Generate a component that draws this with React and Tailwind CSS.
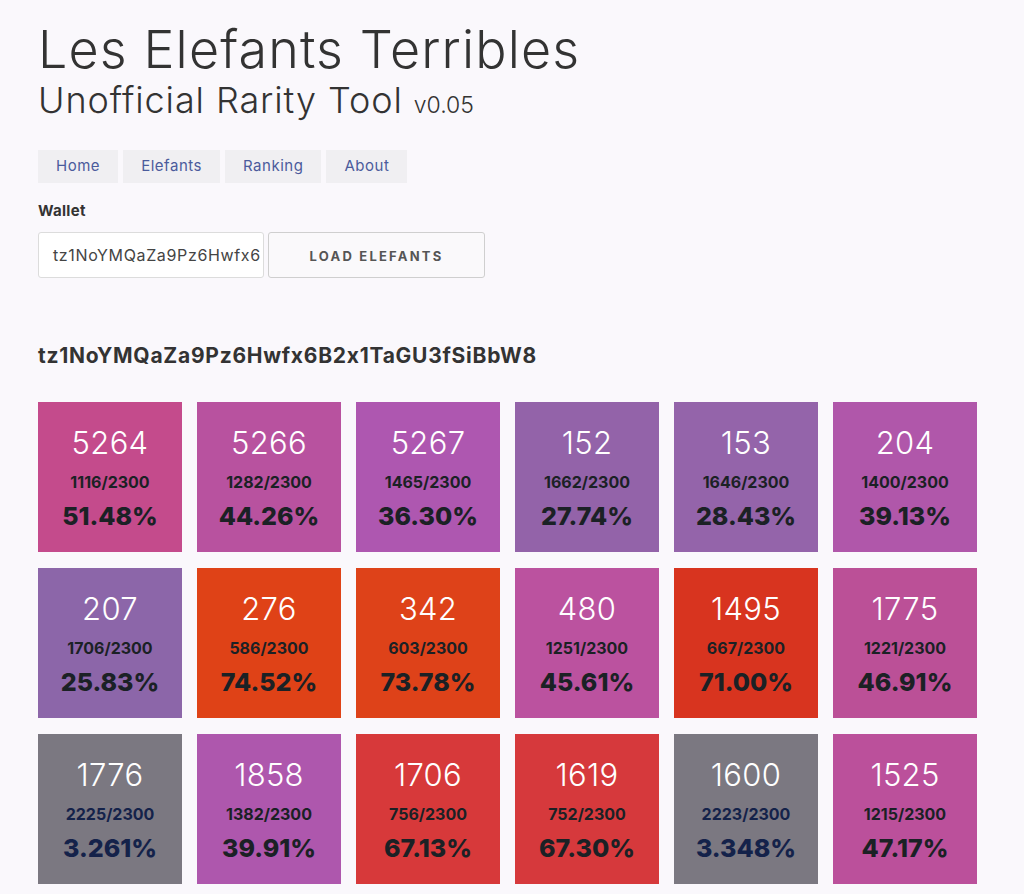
import React from "react";

const tiles = [
  { id: 5264, rank: "1116/2300", pct: "51.48%", bg: "bg-[#c44b8c]", dark: false },
  { id: 5266, rank: "1282/2300", pct: "44.26%", bg: "bg-[#b8529f]", dark: false },
  { id: 5267, rank: "1465/2300", pct: "36.30%", bg: "bg-[#ae57b0]", dark: false },
  { id: 152, rank: "1662/2300", pct: "27.74%", bg: "bg-[#9363a9]", dark: false },
  { id: 153, rank: "1646/2300", pct: "28.43%", bg: "bg-[#9464aa]", dark: false },
  { id: 204, rank: "1400/2300", pct: "39.13%", bg: "bg-[#b057aa]", dark: false },
  { id: 207, rank: "1706/2300", pct: "25.83%", bg: "bg-[#8c66a9]", dark: false },
  { id: 276, rank: "586/2300", pct: "74.52%", bg: "bg-[#df4217]", dark: false },
  { id: 342, rank: "603/2300", pct: "73.78%", bg: "bg-[#de4219]", dark: false },
  { id: 480, rank: "1251/2300", pct: "45.61%", bg: "bg-[#bb529f]", dark: false },
  { id: 1495, rank: "667/2300", pct: "71.00%", bg: "bg-[#d8341f]", dark: false },
  { id: 1775, rank: "1221/2300", pct: "46.91%", bg: "bg-[#bb5097]", dark: false },
  { id: 1776, rank: "2225/2300", pct: "3.261%", bg: "bg-[#7b7881]", dark: true },
  { id: 1858, rank: "1382/2300", pct: "39.91%", bg: "bg-[#ae57ad]", dark: false },
  { id: 1706, rank: "756/2300", pct: "67.13%", bg: "bg-[#d7393a]", dark: false },
  { id: 1619, rank: "752/2300", pct: "67.30%", bg: "bg-[#d6393c]", dark: false },
  { id: 1600, rank: "2223/2300", pct: "3.348%", bg: "bg-[#7b7881]", dark: true },
  { id: 1525, rank: "1215/2300", pct: "47.17%", bg: "bg-[#bb509b]", dark: false },
];

const navItems = ["Home", "Elefants", "Ranking", "About"];

function Tile({ t }) {
  const ink = t.dark ? "text-[#14224a]" : "text-[#1b2125]";
  return (
    <div className={`${t.bg} h-[150px] flex flex-col items-center pt-[21px]`}>
      <div className="text-[31px] font-light leading-[40px] tracking-[0.01em] text-white">{t.id}</div>
      <div className={`mt-[9px] text-[16px] font-bold leading-[20px] ${ink}`}>{t.rank}</div>
      <div className={`mt-[8px] text-[25px] font-extrabold leading-[32px] ${ink}`}>{t.pct}</div>
    </div>
  );
}

export default function App() {
  return (
    <div className="min-h-[894px] bg-[#faf8fc] font-['Inter',sans-serif] text-[#333] [font-feature-settings:'calt'_0]">
      <div className="pl-[38px] pt-[20px]">
        <h1 className="text-[52px] font-light leading-[60px] tracking-[0.022em] text-[#333]">
          Les Elefants Terribles
        </h1>
        <h2 className="text-[36px] font-light leading-[40px] tracking-[0.025em] text-[#333]">
          Unofficial Rarity Tool <span className="text-[23px] tracking-normal">v0.05</span>
        </h2>

        <nav className="mt-[25px] flex gap-[5px]">
          {navItems.map((n) => (
            <a
              key={n}
              className="flex h-[33px] items-center bg-[#f0eff2] px-[18px] text-[15px] tracking-[0.035em] text-[#4b5b9c]"
            >
              {n}
            </a>
          ))}
        </nav>

        <div className="mt-[18px] text-[15px] font-bold leading-[20px] tracking-[0.02em] text-[#333]">Wallet</div>

        <div className="mt-[11px] flex gap-[4px]">
          <div className="flex h-[46px] w-[226px] items-center overflow-hidden whitespace-nowrap rounded-[3px] border border-[#dcdcdc] bg-white px-[14px] text-[16px] tracking-[0.04em] text-[#444]">
            tz1NoYMQaZa9Pz6Hwfx6
          </div>
          <button className="h-[46px] w-[217px] rounded-[3px] border border-[#cfcfcf] bg-[#faf9fb] pt-[3px] text-[13px] font-bold tracking-[0.17em] text-[#555]">
            LOAD ELEFANTS
          </button>
        </div>

        <div className="mt-[64px] text-[21px] font-bold leading-[28px] tracking-[0.035em] text-[#333]">
          tz1NoYMQaZa9Pz6Hwfx6B2x1TaGU3fSiBbW8
        </div>

        <div className="mt-[32px] grid w-[939px] grid-cols-6 gap-x-[15px] gap-y-[16px]">
          {tiles.map((t) => (
            <Tile key={t.id} t={t} />
          ))}
        </div>
      </div>
    </div>
  );
}
